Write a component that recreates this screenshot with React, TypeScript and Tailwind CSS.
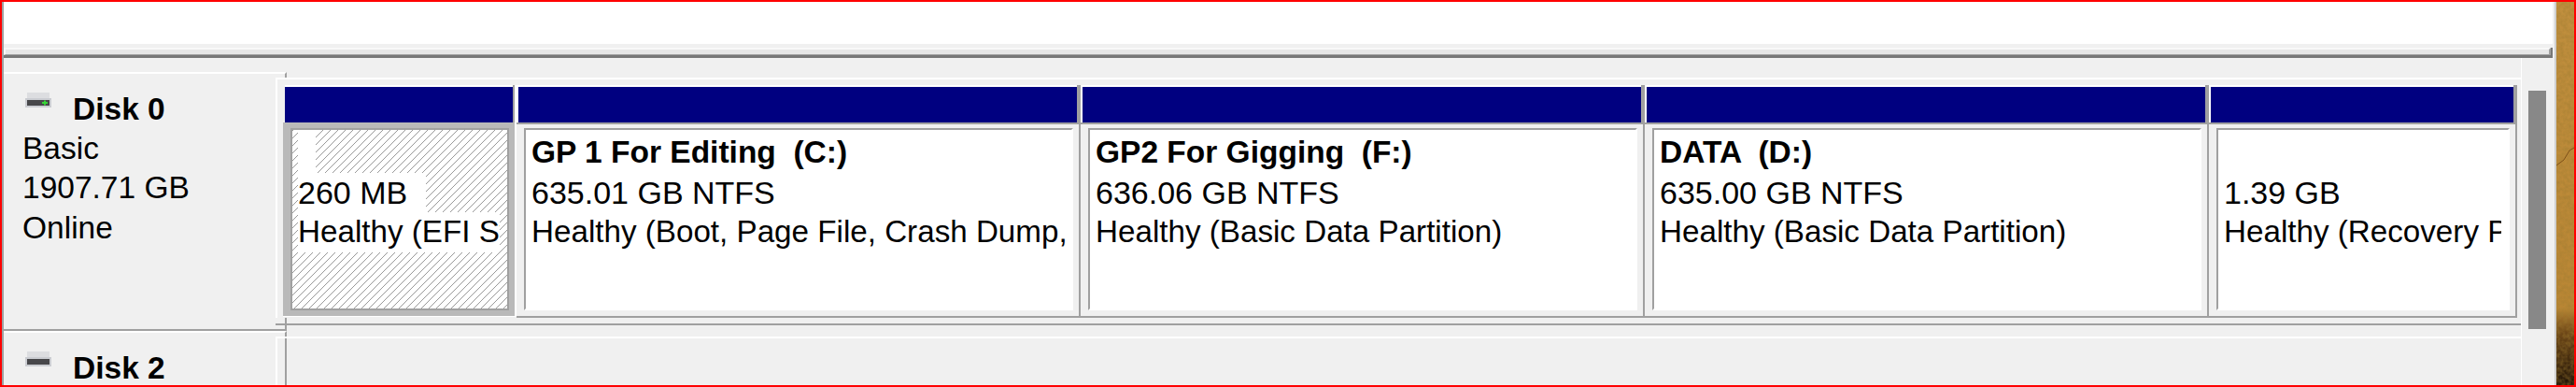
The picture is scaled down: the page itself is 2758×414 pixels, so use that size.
interface PartitionInfo {
  title: string;
  size: string;
  status: string;
  width: string;
  pad: string;
}

const partitions: PartitionInfo[] = [
  { title: 'GP 1 For Editing  (C:)', size: '635.01 GB NTFS', status: 'Healthy (Boot, Page File, Crash Dump,', width: 'w-[604px]', pad: 'pr-[2px]' },
  { title: 'GP2 For Gigging  (F:)', size: '636.06 GB NTFS', status: 'Healthy (Basic Data Partition)', width: 'w-[604px]', pad: 'pr-[6px]' },
  { title: 'DATA  (D:)', size: '635.00 GB NTFS', status: 'Healthy (Basic Data Partition)', width: 'w-[604px]', pad: 'pr-[6px]' },
  { title: ' ', size: '1.39 GB', status: 'Healthy (Recovery Partition)', width: 'w-[330px]', pad: 'pr-[7px]' },
];

function DiskIcon({ lit }: { lit?: boolean }) {
  return (
    <svg width="28" height="16" viewBox="0 0 28 16" className="shrink-0 mt-[3px]">
      <path d="M2 0h24v6H2z" fill="#dcdde0" />
      <path d="M0 6h28v10H0z" fill="#cbcdd2" />
      <path d="M2 8h24v6H2z" fill="#47474a" />
      {lit && <path d="M18 10h6v2h-6zM20 8.5h2v5h-2z" fill="#35d435" />}
    </svg>
  );
}

function DiskTitle({ name, lit }: { name: string; lit?: boolean }) {
  return (
    <div className="flex font-bold ml-[3px] gap-[23px]">
      <DiskIcon lit={lit} />
      <span>{name}</span>
    </div>
  );
}

function Partition({ title, size, status, width, pad }: PartitionInfo) {
  return (
    <div className={`${width} shrink-0 flex flex-col`}>
      <div className="h-[40px] flex">
        <div className="w-[2px] bg-white" />
        <div className="flex-1 bg-[#000080] border-t-2 border-white" />
        <div className="w-[4px] bg-[#a0a0a0]" />
      </div>
      <div className="h-[209px] border-t-2 border-b-2 border-r-2 border-[#a0a0a0] pt-[4px] pl-[8px] pr-[6px] pb-[6px]">
        <div className={`${pad} h-full bg-white border-2 border-t-[#a0a0a0] border-l-[#a0a0a0] border-r-white border-b-white pl-[6px] pt-[3px]`}>
          <div className="overflow-hidden whitespace-pre">
            <div className="font-bold">{title}</div>
            <div className="text-[34px]">{size}</div>
            <div className="text-[33.2px]">{status}</div>
          </div>
        </div>
      </div>
    </div>
  );
}

function SystemPartition() {
  return (
    <div className="w-[250px] shrink-0 flex flex-col">
      <div className="h-[40px] flex pl-[2px]">
        <div className="flex-1 bg-[#000080] border-t-2 border-white" />
        <div className="w-[2px] bg-[#a0a0a0]" />
        <div className="w-[2px] bg-white" />
      </div>
      <div className="h-[208px] border-r-2 border-b border-white">
        <div className="h-[207px] bg-[#b9b9b9] pt-[6px] pl-[8px] pr-[6px] pb-[6px]">
          <div className="h-full border-2 border-[#a0a0a0] pl-[6px] pr-[8px] bg-[repeating-linear-gradient(135deg,#999999_0px,#999999_1px,#ffffff_1px,#ffffff_5.66px)]">
            <div className="overflow-hidden whitespace-pre">
              <div className="w-fit bg-white pt-[3px] font-bold">{'  '}</div>
              <div className="w-fit bg-white pr-[20px] text-[34px]">260 MB</div>
              <div className="bg-white text-[33.2px]">Healthy (EFI System Partition)</div>
            </div>
          </div>
        </div>
      </div>
    </div>
  );
}

function Wood() {
  return (
    <svg width="19" height="410" viewBox="0 0 19 410" className="block">
      <defs>
        <linearGradient id="wood" x1="0" y1="0" x2="0" y2="1">
          <stop offset="0" stopColor="#c08f3e" />
          <stop offset="0.8" stopColor="#b98634" />
          <stop offset="0.86" stopColor="#6f4817" />
          <stop offset="1" stopColor="#1e1206" />
        </linearGradient>
        <filter id="grain">
          <feTurbulence type="fractalNoise" baseFrequency="0.25" numOctaves="3" seed="4" />
          <feColorMatrix values="0 0 0 0 0.35  0 0 0 0 0.2  0 0 0 0 0.03  0 0 0 0.9 -0.25" />
        </filter>
      </defs>
      <rect width="19" height="410" fill="url(#wood)" />
      <rect width="19" height="410" filter="url(#grain)" />
      <path d="M0 175l8-6 6-10 5-3" stroke="#7d5118" strokeWidth="1" fill="none" />
    </svg>
  );
}

export default function App() {
  return (
    <div className="w-[2758px] h-[414px] overflow-hidden border-2 border-[#ff0000] bg-[#f0f0f0] font-['Liberation_Sans',sans-serif] text-[33.5px] leading-[42.5px] text-black flex">
      <div className="flex-1 min-w-0 flex flex-col border-l-2 border-[#a0a0a0]">
        <div className="h-[45px] mr-[2px] bg-white" />
        <div className="h-[11px] mt-[4px] mr-[2px] border-r-2 border-b-[3px] border-[#777777]">
          <div className="h-full bg-[#e6e6e6] border-t-2 border-l-2 border-[#f8f8f8] border-r-2 border-r-[#a0a0a0] border-b border-b-[#a0a0a0]" />
        </div>

        <div className="flex-1 min-h-0 flex">
          <div className="w-[2696px] shrink-0 flex flex-col border-r border-white pt-[15px]">
            <div className="h-[277px] flex">
              <div className="w-[303px] shrink-0 border-t-2 border-white border-b-2 border-b-[#a0a0a0] border-r-2 border-r-[#a0a0a0] pl-[20px] pt-[17px]">
                <DiskTitle name="Disk 0" lit />
                <div className="-mt-[1px]">Basic</div>
                <div>1907.71 GB</div>
                <div>Online</div>
              </div>
              <div className="flex-1 min-w-0 -ml-[12px] pt-[6px] relative z-10">
                <div className="h-[257px] bg-[#f0f0f0] border-t-2 border-l-2 border-white pt-[6px] pl-[6px] flex">
                  <SystemPartition />
                  {partitions.map(p => (
                    <Partition key={p.size} {...p} />
                  ))}
                </div>
                <div className="h-[2px] mt-[6px] bg-[#a0a0a0]" />
              </div>
            </div>

            <div className="flex-1 min-h-0 flex">
              <div className="w-[303px] shrink-0 border-t-2 border-white border-r-2 border-r-[#a0a0a0] pl-[20px] pt-[17px]">
                <DiskTitle name="Disk 2" />
              </div>
              <div className="flex-1 min-w-0 -ml-[12px] pt-[6px]">
                <div className="h-full border-t-2 border-l-2 border-white" />
              </div>
            </div>
          </div>

          <div className="flex-1 pl-[7px] pt-[35px]">
            <div className="w-[19px] h-[255px] bg-[#888888]" />
          </div>
        </div>
      </div>
      <div className="w-[2px] bg-[#cfcfcf]" />
      <div className="w-[19px] shrink-0">
        <Wood />
      </div>
    </div>
  );
}
